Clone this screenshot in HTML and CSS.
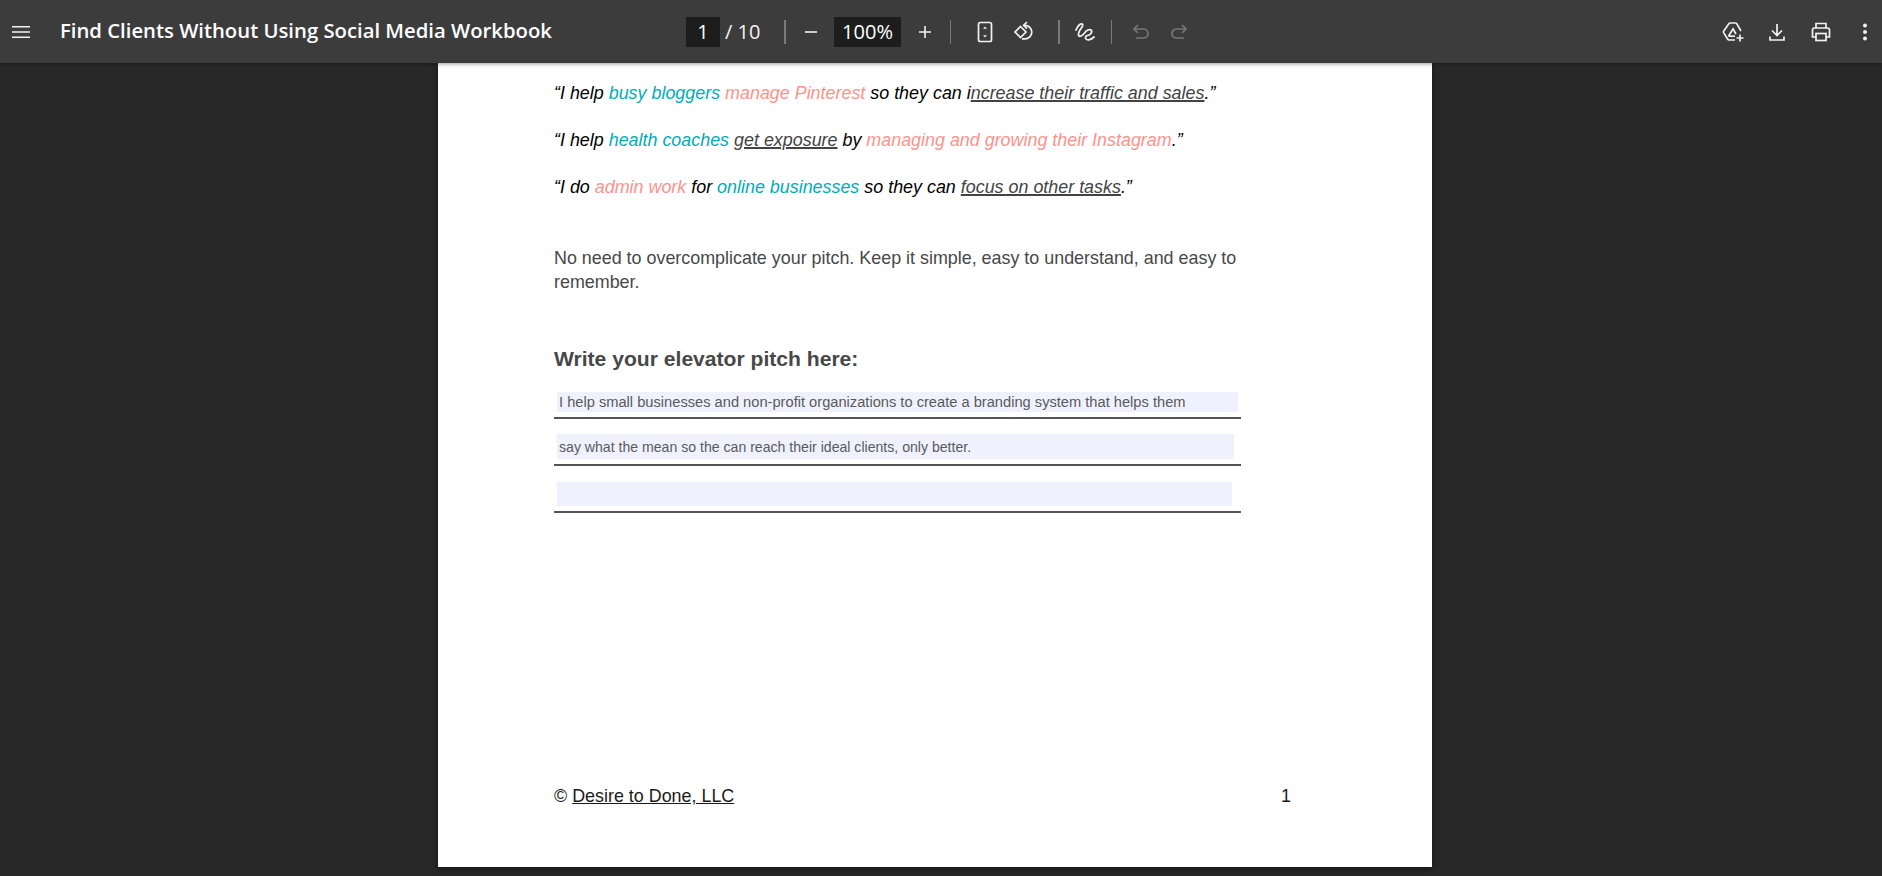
FILE: index.html
```html
<!DOCTYPE html>
<html>

<head>
    <meta http-equiv="Content-Type" content="text/html; charset=utf-8" />
    <title>Find Clients Without Using Social Media Workbook</title>
    <link rel="stylesheet" href="styles.css">
</head>

<body>

    <div class="Toolbar">
        <div class="Toolbar-Start">
            <svg class="Icon Menu-Icon" viewBox="0 0 24 24"><path d="M3 6h18v1.600H3zM3 11.200h18v1.600H3zM3 16.400h18V18H3z" fill="currentColor"/></svg>
            <span class="Doc-Title">Find Clients Without Using Social Media Workbook</span>
        </div>

        <div class="Toolbar-Center">
            <span class="Page-Input">1</span>
            <span class="Page-Total">/ 10</span>
            <span class="Divider Divider-Page"></span>
            <svg class="Icon Zoom-Out" viewBox="0 0 24 24"><path d="M6 11.200h12v1.600H6z" fill="currentColor"/></svg>
            <span class="Zoom-Input">100%</span>
            <svg class="Icon Zoom-In" viewBox="0 0 24 24"><path d="M6 11.200h5.200V6h1.600v5.200H18v1.600h-5.200V18h-1.600v-5.200H6z" fill="currentColor"/></svg>
            <span class="Divider Divider-Zoom"></span>
            <svg class="Icon Fit-Icon" viewBox="0 0 24 24" fill="none" stroke="currentColor" stroke-width="1.700"><rect x="5.500" y="2.500" width="13" height="19" rx="1.800"/><path d="M12 6.500l-2 2.200h4zM12 17.500l-2-2.200h4z" fill="currentColor" stroke="none"/></svg>
            <svg class="Icon Rotate-Icon" viewBox="0 0 24 24" fill="none" stroke="currentColor" stroke-width="1.700"><path d="M8.500 6.500L14 12l-5.500 5.500L3 12z"/><path d="M12 5.300h1a6.800 6.800 0 0 1 0 13.600h-3"/><path d="M15 2l-3.400 3.300 3.400 3.300"/></svg>
            <span class="Divider Divider-Rotate"></span>
            <svg class="Icon Ink-Icon" viewBox="0 0 24 24" fill="none" stroke="currentColor" stroke-width="1.800" stroke-linecap="round"><path d="M3 10C5 5 8 3 9.500 4.200 11.500 6 4.500 11 5.500 15c.7 2.700 4 .5 6-2 2-2.600 5-4.300 6.500-3 1.800 1.600-.3 5-3 5.300-2.300.2-3.300 2-2 3.700 1.600 1.800 5.500.5 8-2"/></svg>
            <span class="Divider Divider-Ink"></span>
            <svg class="Icon Undo-Icon" viewBox="0 0 24 24" fill="none" stroke="currentColor" stroke-width="1.700"><path d="M9 5L5 9l4 4"/><path d="M5 9h9.500a4.500 4.500 0 0 1 0 9H7"/></svg>
            <svg class="Icon Redo-Icon" viewBox="0 0 24 24" fill="none" stroke="currentColor" stroke-width="1.700"><path d="M15 5l4 4-4 4"/><path d="M19 9H9.500a4.500 4.500 0 0 0 0 9H17"/></svg>
        </div>

        <div class="Toolbar-End">
            <svg class="Icon Drive-Icon" viewBox="0 0 24 24" fill="none" stroke="currentColor" stroke-width="1.700"><path d="M14 20H8a1.500 1.500 0 0 1-1.300-.8L2.600 12.600a1.300 1.300 0 0 1 0-1.300L7.800 3.700A1.400 1.400 0 0 1 9 3h5.500a1.400 1.400 0 0 1 1.200.7L20 11"/><path d="M7.500 16.200L12 8.800l3 5.200"/><path d="M7.500 16.200H14"/><path d="M19 14.500v7M15.500 18h7"/></svg>
            <svg class="Icon Download-Icon" viewBox="0 0 24 24" fill="none" stroke="currentColor" stroke-width="1.700"><path d="M12 4v11M7 10.500l5 5 5-5"/><path d="M5 16.500V20h14v-3.500"/></svg>
            <svg class="Icon Print-Icon" viewBox="0 0 24 24" fill="none" stroke="currentColor" stroke-width="1.700"><path d="M7 8V3.500h10V8"/><path d="M7 17H3.500V10a2 2 0 0 1 2-2h13a2 2 0 0 1 2 2v7H17"/><rect x="7" y="13.500" width="10" height="7"/></svg>
            <svg class="Icon More-Icon" viewBox="0 0 24 24" fill="currentColor"><circle cx="12" cy="5.500" r="2"/><circle cx="12" cy="12" r="2"/><circle cx="12" cy="18.500" r="2"/></svg>
        </div>
    </div>

    <div class="Viewer">
        <div class="Page">
            <p class="Quote">“I help <span class="Teal">busy bloggers</span> <span class="Coral">manage Pinterest</span> so they can i<u class="Grey">ncrease their traffic and sales</u>.”</p>
            <p class="Quote">“I help <span class="Teal">health coaches</span> <u class="Grey">get exposure</u> by <span class="Coral">managing and growing their Instagram</span>.”</p>
            <p class="Quote">“I do <span class="Coral">admin work</span> for <span class="Teal">online businesses</span> so they can <u class="Grey">focus on other tasks</u>.”</p>

            <p class="Body-Text">No need to overcomplicate your pitch. Keep it simple, easy to understand, and easy to remember.</p>

            <h2 class="Pitch-Title">Write your elevator pitch here:</h2>

            <div class="Field-Row Field-One"><div class="Field">I help small businesses and non-profit organizations to create a branding system that helps them</div></div>
            <div class="Field-Row Field-Two"><div class="Field">say what the mean so the can reach their ideal clients, only better.</div></div>
            <div class="Field-Row Field-Three"><div class="Field"></div></div>

            <div class="Page-Footer">
                <span>© <u>Desire to Done, LLC</u></span>
                <span>1</span>
            </div>
        </div>
    </div>

</body>

</html>
```

FILE: styles.css
```css
html,
body {
    margin: 0;
    height: 100%;
    overflow: hidden;
}

body {
    background-color: #282828;
    font-family: "Liberation Sans", Arial, sans-serif;
}

.Toolbar {
    display: flex;
    align-items: center;
    height: 63px;
    background-color: #3c3c3c;
    color: #f1f1f1;
    box-shadow: 0 1px 4px rgba(0, 0, 0, 0.4);
    position: relative;
}

.Toolbar-Start {
    display: flex;
    align-items: center;
    width: 686px;
    padding-left: 9px;
    box-sizing: border-box;
}

.Icon {
    width: 24px;
    height: 24px;
    flex: none;
}

.Doc-Title {
    margin-left: 27px;
    margin-bottom: 4px;
    font-family: "Open Sans", "Noto Sans", sans-serif;
    font-size: 20.300px;
    font-weight: 600;
    color: #ffffff;
}

.Toolbar-Center {
    display: flex;
    align-items: center;
    width: 530px;
}

.Page-Input,
.Zoom-Input {
    background-color: #1d1d1d;
    color: #ffffff;
    height: 30px;
    line-height: 30px;
    text-align: center;
    font-family: "Open Sans", "Noto Sans", sans-serif;
    font-size: 20px;
}

.Page-Input {
    width: 34px;
}

.Zoom-Input {
    width: 67px;
    margin-left: 11px;
}

.Page-Total {
    margin-left: 5px;
    width: 50px;
    font-family: "Open Sans", "Noto Sans", sans-serif;
    font-size: 20px;
}

.Divider {
    width: 1px;
    height: 24px;
    background-color: #7a7a7a;
}

.Divider-Page {
    width: 2px;
    margin-left: 9px;
}

.Zoom-Out {
    margin-left: 13px;
}

.Zoom-In {
    margin-left: 12px;
}

.Divider-Zoom {
    margin-left: 13px;
}

.Fit-Icon {
    margin-left: 22px;
}

.Rotate-Icon {
    margin-left: 15px;
}

.Divider-Rotate {
    width: 2px;
    margin-left: 22px;
}

.Ink-Icon {
    margin-left: 13px;
}

.Divider-Ink {
    margin-left: 14px;
}

.Undo-Icon {
    margin-left: 17px;
    color: #777777;
}

.Redo-Icon {
    margin-left: 14px;
    color: #777777;
}

.Toolbar-End {
    display: flex;
    align-items: center;
    gap: 20px;
    margin-left: auto;
    padding-right: 5px;
}

.Viewer {
    padding-left: 438px;
}

.Page {
    width: 994px;
    height: 804px;
    padding: 20px 0 0 116px;
    box-sizing: border-box;
    background-color: #ffffff;
    box-shadow: 0 2px 6px rgba(0, 0, 0, 0.5);
}

.Quote {
    margin: 0 0 26px;
    font-size: 17.900px;
    line-height: 21px;
    font-style: italic;
    color: #000000;
}

.Teal {
    color: #00adb5;
}

.Coral {
    color: #ff918c;
}

.Grey {
    color: #434343;
    text-decoration-thickness: 1.500px;
}

.Body-Text {
    width: 700px;
    margin: 48px 0 0;
    font-size: 17.900px;
    line-height: 24px;
    color: #484848;
}

.Pitch-Title {
    margin: 52px 0 0;
    font-size: 21.100px;
    line-height: 26px;
    color: #484848;
}

.Field-Row {
    width: 687px;
    border-bottom: 2px solid #555555;
    box-sizing: border-box;
    padding-left: 3px;
    padding-bottom: 5px;
}

.Field {
    background-color: #eff2fe;
    font-size: 14.670px;
    color: #5a5a5a;
    padding-left: 2px;
    display: flex;
    align-items: center;
}

.Field-One {
    margin-top: 20px;
}

.Field-One .Field {
    width: 679px;
    height: 20px;
}

.Field-Two {
    margin-top: 15px;
}

.Field-Two .Field {
    width: 675px;
    height: 25px;
    font-size: 14.100px;
}

.Field-Three {
    margin-top: 16px;
}

.Field-Three .Field {
    width: 673px;
    height: 24px;
}

.Page-Footer {
    display: flex;
    justify-content: space-between;
    width: 737px;
    margin-top: 272px;
    font-size: 17.900px;
    line-height: 22px;
    color: #1a1a1a;
}
```
